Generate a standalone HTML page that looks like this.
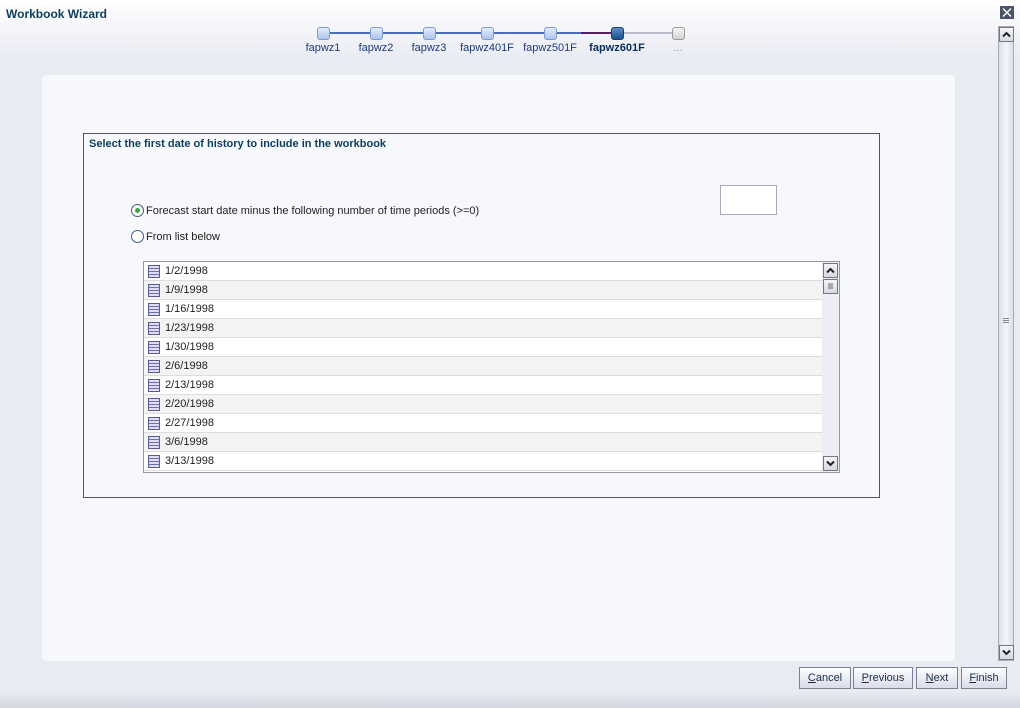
<!DOCTYPE html>
<html><head><style>
*{margin:0;padding:0;box-sizing:border-box}
body{width:1020px;height:708px;background:#e9ebf3;font-family:"Liberation Sans",sans-serif;font-size:11px;position:relative;overflow:hidden;color:#222}
.abs{position:absolute}
.title{left:6px;top:7px;font-weight:bold;font-size:12px;color:#0b3d5c}
.line{height:2px;top:32px;background:#4a6fb8}
.node{width:13px;height:13px;top:27px;border:1px solid #7c9bd6;border-radius:3px;background:linear-gradient(#e3ecfb,#aec4ec)}
.lbl{top:42px;font-size:11px;color:#1e3a7a;text-align:center;width:80px}
.panel{left:42px;top:75px;width:913px;height:586px;background:#f7f8fc;border-radius:4px}
.box{left:83px;top:133px;width:797px;height:365px;border:1px solid #555;background:#f7f8fc}
.hdr{left:89px;top:138px;font-weight:bold;font-size:11px;color:#0b3d5c}
.radio{width:13px;height:13px;border:1px solid #3b5e88;border-radius:50%;background:#fff}
.list{left:143px;top:261px;width:697px;height:212px;border:1px solid #999;background:#fff}
.row{position:absolute;left:0;width:678px;height:19px;border-bottom:1px solid #ddd;font-size:11px;line-height:18px;padding-left:21px}
.row i{position:absolute;left:4px;top:3px;width:12px;height:13px;border:1px solid #5a5a90;background:repeating-linear-gradient(#ddddf5 0 2px,#7070a8 2px 3px)}
.sb{background:linear-gradient(90deg,#dcdfe8,#f4f5f9,#dcdfe8);border:1px solid #aab}
.arr{width:15px;height:15px;border:1px solid #777;background:linear-gradient(#f4f5f9,#d5d8e2)}
.arr svg{display:block;margin:3px 2px}
.btn{top:667px;height:22px;border:1px solid #7a8194;background:linear-gradient(#fdfdff,#d9dde8);font-size:11px;text-align:center;line-height:20px;color:#1b2c4a}
</style></head><body>
<div class="abs" style="left:0;top:0;width:1020px;height:60px;background:linear-gradient(#fff,#e9ebf3)"></div>
<div class="abs title">Workbook Wizard</div>
<div class="abs" style="left:1000px;top:6px;width:14px;height:13px;background:#4a5568"><svg width="14" height="13"><path d="M3 2.5L11 10.5M11 2.5L3 10.5" stroke="#fff" stroke-width="1.4"/></svg></div>
<div class="abs line" style="left:323px;width:282px"></div>
<div class="abs line" style="left:581px;width:30px;background:#5a1f5e"></div>
<div class="abs line" style="left:617px;width:61px;background:#b8bcc8"></div>
<div class="abs node" style="left:317px"></div>
<div class="abs node" style="left:370px"></div>
<div class="abs node" style="left:423px"></div>
<div class="abs node" style="left:481px"></div>
<div class="abs node" style="left:544px"></div>
<div class="abs node" style="left:611px;background:linear-gradient(#5e8fc4,#1b4f8c);border-color:#1b3f6c"></div>
<div class="abs node" style="left:672px;background:linear-gradient(#f4f4f4,#d3d3d3);border-color:#999"></div>
<div class="abs lbl" style="left:283px">fapwz1</div>
<div class="abs lbl" style="left:336px">fapwz2</div>
<div class="abs lbl" style="left:389px">fapwz3</div>
<div class="abs lbl" style="left:447px">fapwz401F</div>
<div class="abs lbl" style="left:510px">fapwz501F</div>
<div class="abs lbl" style="left:577px;font-weight:bold;color:#0b2d5c">fapwz601F</div>
<div class="abs lbl" style="left:638px;color:#999">...</div>
<div class="abs panel"></div>
<div class="abs box"></div>
<div class="abs hdr">Select the first date of history to include in the workbook</div>
<div class="abs radio" style="left:131px;top:204px"><div style="width:5px;height:5px;border-radius:50%;background:#3aa93a;margin:3px"></div></div>
<div class="abs" style="left:146px;top:205px">Forecast start date minus the following number of time periods (&gt;=0)</div>
<div class="abs" style="left:720px;top:185px;width:57px;height:30px;border:1px solid #aab;background:#fff"></div>
<div class="abs radio" style="left:131px;top:230px"></div>
<div class="abs" style="left:146px;top:231px">From list below</div>
<div class="abs list">
<div class="row" style="top:0">1/2/1998<i></i></div>
<div class="row" style="top:19px;background:#f3f3f3">1/9/1998<i></i></div>
<div class="row" style="top:38px">1/16/1998<i></i></div>
<div class="row" style="top:57px;background:#f3f3f3">1/23/1998<i></i></div>
<div class="row" style="top:76px">1/30/1998<i></i></div>
<div class="row" style="top:95px;background:#f3f3f3">2/6/1998<i></i></div>
<div class="row" style="top:114px">2/13/1998<i></i></div>
<div class="row" style="top:133px;background:#f3f3f3">2/20/1998<i></i></div>
<div class="row" style="top:152px">2/27/1998<i></i></div>
<div class="row" style="top:171px;background:#f3f3f3">3/6/1998<i></i></div>
<div class="row" style="top:190px">3/13/1998<i></i></div>
<div class="abs" style="left:678px;top:0;width:17px;height:210px;background:#eceef3"></div>
<div class="abs arr" style="left:679px;top:1px"><svg width="9" height="7"><path d="M1 5.5L4.5 2L8 5.5" stroke="#222" stroke-width="2" fill="none"/></svg></div>
<div class="abs arr" style="left:679px;top:17px"><svg width="9" height="7"><path d="M2 1H7M2 3H7M2 5H7" stroke="#666" stroke-width="1"/></svg></div>
<div class="abs arr" style="left:679px;top:194px"><svg width="9" height="7"><path d="M1 1.5L4.5 5L8 1.5" stroke="#222" stroke-width="2" fill="none"/></svg></div>
</div>
<div class="abs sb" style="left:998px;top:26px;width:16px;height:635px"></div>
<div class="abs" style="left:1003px;top:318px;width:6px;height:6px;background:repeating-linear-gradient(#888 0 1px,transparent 1px 2px)"></div>
<div class="abs arr" style="left:999px;top:27px"><svg width="9" height="7"><path d="M1 5.5L4.5 2L8 5.5" stroke="#222" stroke-width="2" fill="none"/></svg></div>
<div class="abs arr" style="left:999px;top:645px"><svg width="9" height="7"><path d="M1 1.5L4.5 5L8 1.5" stroke="#222" stroke-width="2" fill="none"/></svg></div>
<div class="abs btn" style="left:799px;width:52px"><u>C</u>ancel</div>
<div class="abs btn" style="left:853px;width:60px"><u>P</u>revious</div>
<div class="abs btn" style="left:916px;width:42px"><u>N</u>ext</div>
<div class="abs btn" style="left:961px;width:46px"><u>F</u>inish</div>
<div class="abs" style="left:0;top:692px;width:1020px;height:16px;background:linear-gradient(#e9ebf3,#d3d6e0)"></div>
</body></html>
